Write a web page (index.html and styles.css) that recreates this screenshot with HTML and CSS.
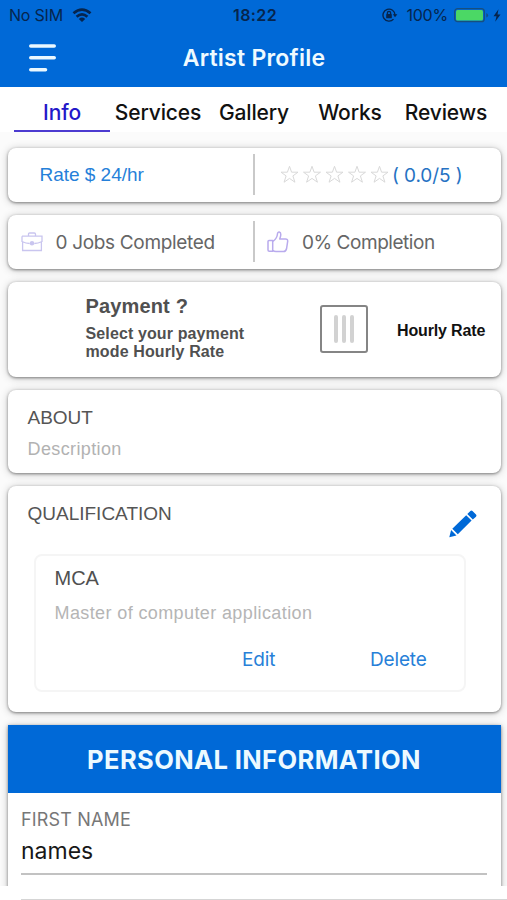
FILE: index.html
```html
<!DOCTYPE html>
<html lang="en">
<head>
<meta charset="utf-8">
<title>Artist Profile</title>
<link rel="stylesheet" href="styles.css">
</head>
<body>
<header class="header">
  <div class="status">
    <div class="status-left">
      <span class="carrier">No SIM</span>
      <svg width="20" height="15" viewBox="0 0 20 15" fill="none" stroke="#06254d" stroke-width="2.8"><path d="M1.5 5.2Q10-2 18.5 5.2M4.6 8.7Q10 4 15.4 8.7"/><path d="M6.8 10.9Q10 8.3 13.2 10.9L10 14Z" fill="#06254d" stroke="none"/></svg>
    </div>
    <span class="clock">18:22</span>
    <div class="status-right">
      <svg width="16" height="14" viewBox="0 0 16 14" fill="none" stroke="#06254d" stroke-width="1.4"><path d="M11.5 11.1A6 6 0 1 1 13 7"/><path d="M10.8 6.3H15.4L13 9.2Z" fill="#06254d" stroke="none"/><rect x="4.2" y="6" width="5.6" height="4.3" rx=".6" fill="#06254d" stroke="none"/><path d="M5.4 6V5a1.6 1.6 0 0 1 3.2 0v1"/></svg>
      <span class="percent">100%</span>
      <svg class="battery" width="35" height="15" viewBox="0 0 35 15"><rect x=".7" y=".7" width="29.6" height="13" rx="3" fill="none" stroke="#174f7f" stroke-width="1.3"/><rect x="2" y="2" width="27" height="10.4" rx="1.5" fill="#4bd865"/><path d="M32.3 5v4.6q1.8-.7 1.8-2.3T32.3 5Z" fill="#174f7f"/></svg>
      <svg width="8" height="13" viewBox="0 0 8 13"><path d="M5.5.3.5 7.2h3L2.2 12.7 7.5 5.5h-3Z" fill="#06254d"/></svg>
    </div>
  </div>
  <div class="nav">
    <svg class="menu" width="28" height="28" viewBox="0 0 28 28" stroke="#eaf8ff" stroke-width="3.6" stroke-linecap="round"><path d="M2.8 2H26.2M2.8 13.8H26.2M2.8 25.7H17.5"/></svg>
    <h1 class="title">Artist Profile</h1>
  </div>
</header>
<nav class="tabs">
  <a class="tab active">Info</a><a class="tab">Services</a><a class="tab">Gallery</a><a class="tab">Works</a><a class="tab">Reviews</a>
</nav>
<main class="content">
  <section class="card split">
    <div class="half rate"><span>Rate $ 24/hr</span></div>
    <div class="half rating">
      <svg width="110" height="20" viewBox="0 0 110 20" fill="none" stroke="#d9d9d9" stroke-width="1"><defs><path id="star" d="M9.5 1.3 11.6 7.2H18L12.9 10.9 14.9 17.2 9.5 13.4 4.1 17.2 6.1 10.9 1 7.2H7.4Z"/></defs><use href="#star"/><use href="#star" x="22.5"/><use href="#star" x="45"/><use href="#star" x="67.5"/><use href="#star" x="90"/></svg>
      <span class="score">( 0.0/5 )</span>
    </div>
  </section>
  <section class="card split">
    <div class="half jobs">
      <svg width="22" height="20" viewBox="0 0 22 20" fill="none" stroke="#c9c5ef" stroke-width="1.3"><path d="M7.5 4V2.2Q7.5 1 8.7 1H13.3Q14.5 1 14.5 2.2V4M1 4.2H21V9.5Q17 11.5 13.3 11.5M8.7 11.5Q5 11.5 1 9.5V4.2M1.6 10.2V18.5H20.4V10.2"/><circle cx="11" cy="11.3" r="1.6" fill="#c9c5ef"/></svg>
      <span class="jobs-text">0 Jobs Completed</span>
    </div>
    <div class="half completion">
      <svg width="22" height="22" viewBox="0 0 22 22" fill="none" stroke="#b9abed" stroke-width="1.5" stroke-linejoin="round"><path d="M1 10.5Q1 9.5 2 9.5H5.7V20.2H2.3Q1 20.2 1 19ZM5.7 10.5C9 8.5 10.3 5.5 10.6 2.2 10.8.5 13.8.5 13.8 3.5 13.8 5.2 13 7 12.7 8H18.5Q20.8 8 20.7 10.2L19.6 17.5Q19 20.5 16.5 20.5H9Q7 20.5 5.7 19.2"/></svg>
      <span class="completion-text">0% Completion</span>
    </div>
  </section>
  <section class="card payment">
    <div class="pay-copy">
      <h2>Payment ?</h2>
      <p><span class="line1">Select your payment</span><br><span class="line2">mode Hourly Rate</span></p>
    </div>
    <div class="toggle"><i></i><i></i><i></i></div>
    <span class="mode">Hourly Rate</span>
  </section>
  <section class="card about">
    <h3>ABOUT</h3>
    <p>Description</p>
  </section>
  <section class="card qualification">
    <div class="qual-head">
      <h3>QUALIFICATION</h3>
      <svg width="28" height="28" viewBox="0 0 28 28" fill="#0069d7"><path d="M.3 27.2 2.1 20 7.5 25.5ZM3.3 18.8 17.2 5.2 22.6 10.6 8.8 24.3ZM18.3 4.1 21.4 1Q22.4 0 23.5 1L27 4.6Q28 5.7 27 6.7L23.8 9.5Z"/></svg>
    </div>
    <div class="qual-item">
      <h4>MCA</h4>
      <p>Master of computer application</p>
      <div class="actions"><a class="edit">Edit</a><a class="delete">Delete</a></div>
    </div>
  </section>
  <section class="personal">
    <h2><span>PERSONAL INFORMATION</span></h2>
    <div class="field"><label>FIRST NAME</label><div class="value">names</div></div>
  </section>
</main>
<footer class="footer"></footer>
</body>
</html>
```
FILE: styles.css
```css
* { box-sizing: border-box; }
body { margin: 0; width: 507px; height: 900px; overflow: hidden; display: flex; flex-direction: column; background: #fff; font-family: Inter, sans-serif; }
h1, h2, h3, h4, p { margin: 0; font-weight: 400; }
svg { display: block; flex: none; }
span, a { white-space: nowrap; }
.header { height: 87px; flex: none; background: #0069d7; }
.status { height: 29px; display: grid; grid-template-columns: 1fr 60px 1fr; align-items: center; color: #06254d; font-size: 16px; line-height: 30px; }
.status-left { display: flex; align-items: center; gap: 9px; padding-left: 9px; }
.carrier { letter-spacing: -.2px; }
.clock { text-align: center; font-weight: 600; font-size: 16px; letter-spacing: .4px; padding-left: 3px; }
.status-right { display: flex; align-items: center; justify-content: flex-end; padding-right: 6px; }
.percent { margin: 0 6px 0 8px; letter-spacing: -.2px; }
.battery { margin-right: 4px; }
.nav { height: 58px; display: grid; grid-template-columns: 84px 1fr 84px; align-items: center; }
.menu { margin-left: 28px; }
.title { text-align: center; color: #eefaff; font-size: 23px; font-weight: 600; line-height: 58px; letter-spacing: .25px; padding-left: 1px; }
.tabs { height: 45px; flex: none; display: grid; grid-template-columns: repeat(5, 96px); padding-left: 14px; }
.tab { height: 45px; line-height: 51px; text-align: center; font-size: 21px; font-weight: 500; letter-spacing: -.15px; color: #111; }
.tab.active { color: #2318c9; border-bottom: 2px solid #4c3bd0; }
.content { flex: none; height: 754px; padding: 16px 6.5px 0 7.5px; display: flex; flex-direction: column; gap: 13.3px; background: #fbfbfb; overflow: hidden; }
.card { flex: none; background: #fff; border-radius: 8px; box-shadow: 0 1px 3px rgba(0,0,0,.42), 0 1px 8px rgba(0,0,0,.22); }
.split { height: 53.7px; display: flex; align-items: center; }
.half { width: 245.5px; height: 41px; display: flex; align-items: center; }
.half + .half { border-left: 2px solid #c9c9c9; }
.rate { padding-left: 32px; color: #2580d9; font: 19px "Liberation Sans", sans-serif; }
.rate span { letter-spacing: -.02px; }
.rating { padding-left: 25px; }
.score { color: #2672c3; font-size: 19px; margin-left: 2px; letter-spacing: -.1px; padding-top: 2px; }
.jobs { padding-left: 13px; gap: 13px; color: #666; font-size: 19px; }
.completion { padding-left: 12px; gap: 13px; color: #666; font-size: 19px; }
.jobs-text { letter-spacing: -.33px; padding-top: 2px; }
.completion-text { letter-spacing: -.46px; padding-top: 2px; }
.payment { height: 95px; display: flex; font-family: "Liberation Sans", sans-serif; font-weight: 700; color: #505050; }
.pay-copy { width: 235px; padding: 12px 0 0 78px; }
.pay-copy h2 { font-size: 20px; line-height: 24px; font-weight: 700; letter-spacing: .15px; }
.pay-copy p { margin-top: 7px; font-size: 16px; line-height: 18px; font-weight: 700; letter-spacing: .12px; }
.toggle { width: 48px; height: 48px; margin: 23px 0 0 77.5px; border: 2px solid #858585; border-radius: 3px; display: flex; align-items: center; justify-content: center; gap: 4px; }
.toggle i { width: 4px; height: 28px; border-radius: 2px; background: #d2d2d2; }
.mode { margin-left: 29px; line-height: 97px; color: #111; font-size: 16px; letter-spacing: -.15px; }
.about { height: 82.5px; padding: 16px 20px; font-family: "Liberation Sans", sans-serif; }
h3 { font: 19px/24px "Liberation Sans", sans-serif; color: #555; }
.about p { margin-top: 7px; font-size: 18px; line-height: 24px; color: #b2b2b2; letter-spacing: .38px; }
.qualification { height: 226px; padding: 16px 24px 0 20px; }
.qual-head { height: 52px; display: flex; justify-content: space-between; }
.qual-head svg { margin-top: 8px; }
.qual-item { width: 432px; height: 138px; margin-left: 6.5px; padding: 10px 18.5px; border: 2px solid #f5f5f5; border-radius: 8px; font-family: "Liberation Sans", sans-serif; }
.qual-item h4 { font-size: 20px; line-height: 24px; color: #505050; }
.qual-item p { margin-top: 11px; font-size: 18px; line-height: 24px; color: #b5b5b5; letter-spacing: .39px; }
.actions { display: flex; margin-top: 23px; padding-left: 187.5px; color: #2780d8; font: 19px/24px Inter, sans-serif; letter-spacing: -.15px; }
.edit { width: 128px; }
.personal { flex: none; height: 200px; background: #fff; box-shadow: 0 1px 3px rgba(0,0,0,.42), 0 1px 8px rgba(0,0,0,.22); }
.personal h2 { height: 67.5px; background: #0069d7; color: #edfaff; font-size: 25.5px; line-height: 69px; font-weight: 650; letter-spacing: .4px; text-align: center; }
.field { margin: 0 13.5px; height: 82px; border-bottom: 2px solid #c2c2c2; padding-top: 14px; }
.field label { display: block; font-size: 18px; line-height: 25px; letter-spacing: .16px; color: #777; }
.value { margin-top: 5px; font-size: 23px; line-height: 28px; color: #181818; }
.footer { height: 14px; margin-left: 21px; border-bottom: 1px solid #d5d5d5; }
```
